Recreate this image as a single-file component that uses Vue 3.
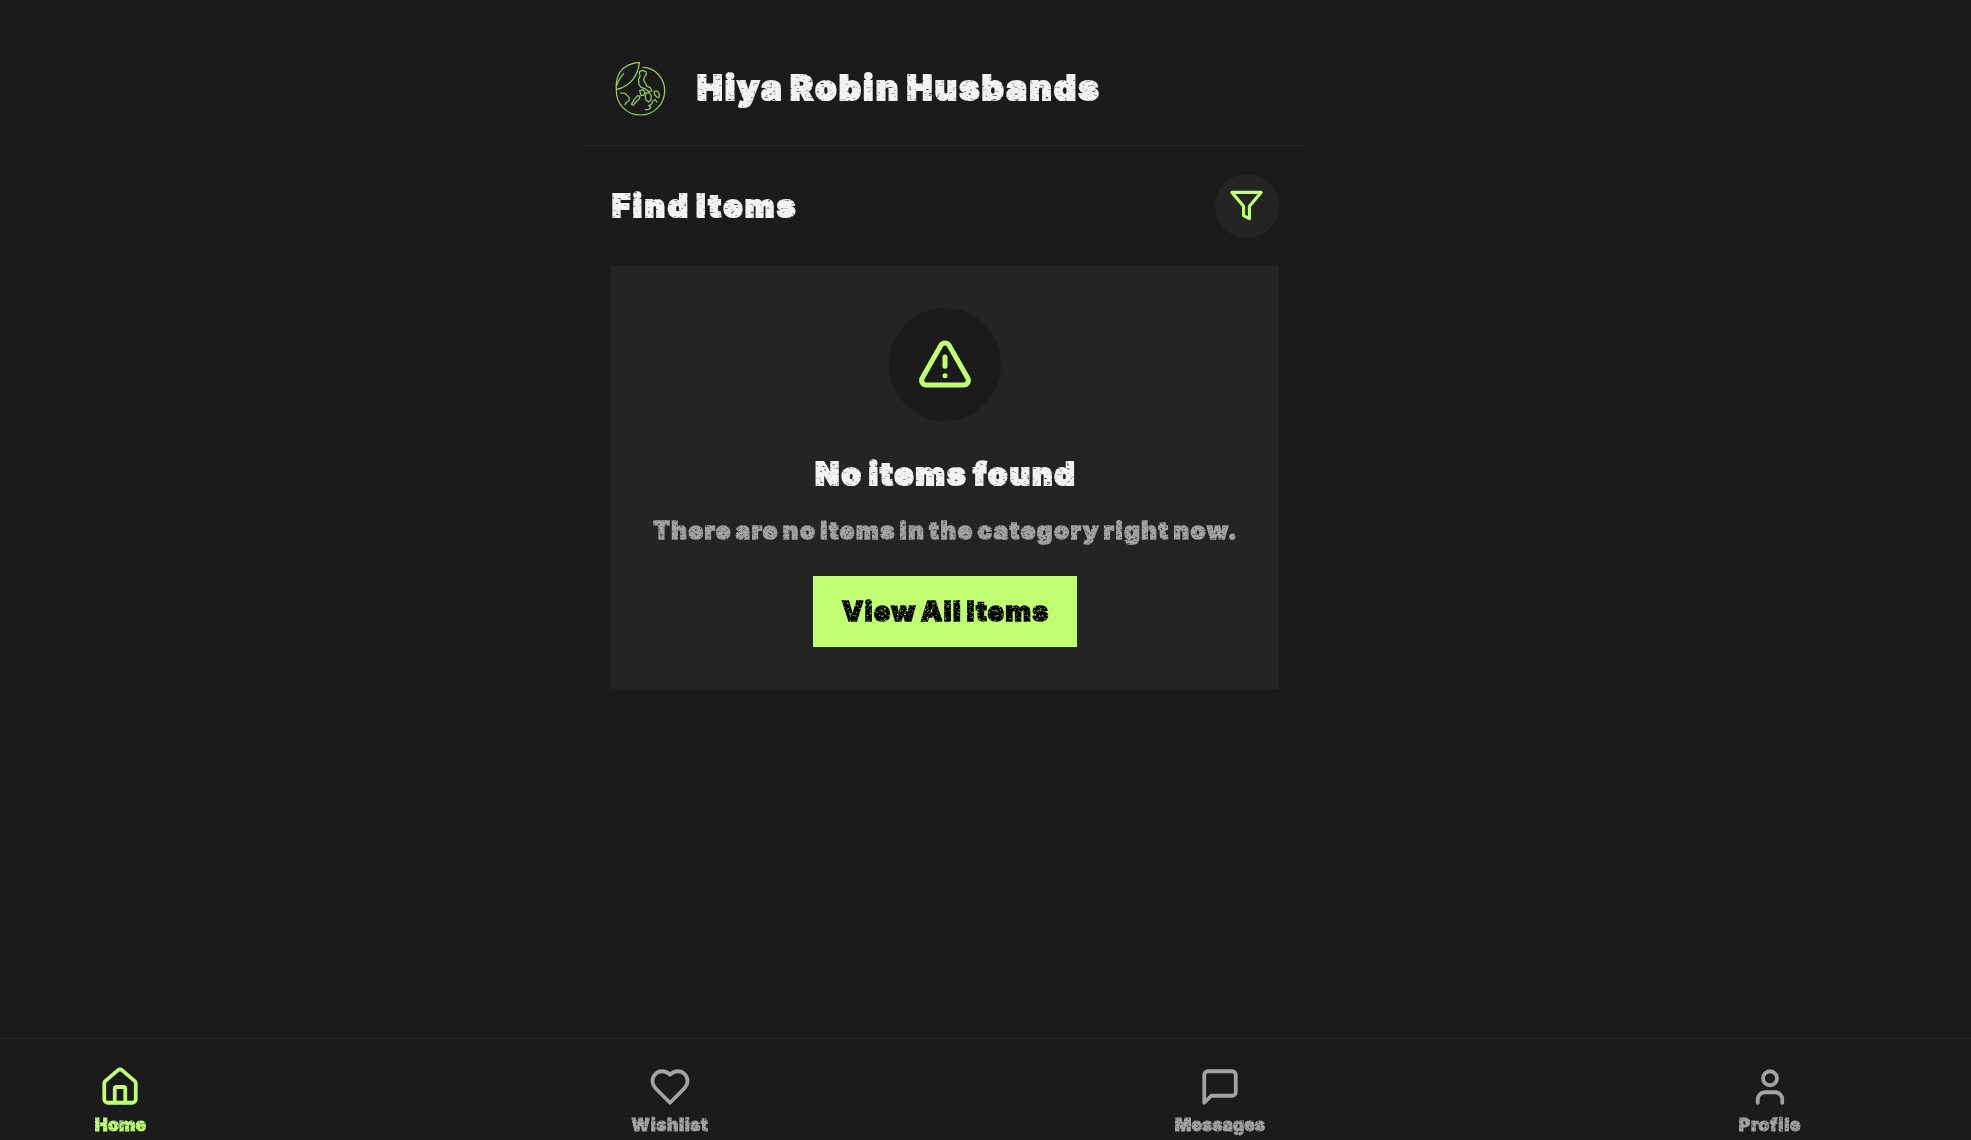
<script setup>
const items = [
  { label: 'Home', cls: 'home', paths: ['M15 21v-8a1 1 0 0 0-1-1h-4a1 1 0 0 0-1 1v8', 'M3 10a2 2 0 0 1 .709-1.528l7-5.999a2 2 0 0 1 2.582 0l7 5.999A2 2 0 0 1 21 10v9a2 2 0 0 1-2 2H5a2 2 0 0 1-2-2z'] },
  { label: 'Wishlist', cls: 'wishlist', paths: ['M19 14c1.49-1.46 3-3.21 3-5.5A5.5 5.5 0 0 0 16.5 3c-1.76 0-3 .5-4.5 2-1.5-1.5-2.74-2-4.5-2A5.5 5.5 0 0 0 2 8.5c0 2.3 1.5 4.05 3 5.5l7 7Z'] },
  { label: 'Messages', cls: 'messages', paths: ['M21 15a2 2 0 0 1-2 2H7l-4 4V5a2 2 0 0 1 2-2h14a2 2 0 0 1 2 2z'] },
  { label: 'Profile', cls: 'profile', paths: ['M19 21v-2a4 4 0 0 0-4-4H9a4 4 0 0 0-4 4v2', 'M16 7a4 4 0 1 1-8 0a4 4 0 1 1 8 0z'] },
]
</script>

<template>
  <div class="page">
    <svg class="defs" width="0" height="0" aria-hidden="true">
      <filter id="dirt" x="-2%" y="0" width="104%" height="100%" color-interpolation-filters="sRGB">
        <feTurbulence type="fractalNoise" baseFrequency="0.25 0.5" numOctaves="2" seed="4" result="n" />
        <feColorMatrix in="n" type="matrix" values="0 0 0 0 0  0 0 0 0 0  0 0 0 0 0  -4 0 0 0 3.5" result="m" />
        <feComposite in="SourceGraphic" in2="m" operator="in" />
      </filter>
      <filter id="grit" x="-2%" y="0" width="104%" height="100%" color-interpolation-filters="sRGB">
        <feTurbulence type="fractalNoise" baseFrequency="0.4 0.6" numOctaves="2" seed="7" result="n" />
        <feColorMatrix in="n" type="matrix" values="0 0 0 0 0  0 0 0 0 0  0 0 0 0 0  -3.5 0 0 0 2.95" result="m" />
        <feComposite in="SourceGraphic" in2="m" operator="in" />
      </filter>
    </svg>
    <main class="content">
      <header class="header">
        <svg class="logo" viewBox="34 33 168 168">
          <path d="M130 52C165 52 195 84 195 122C195 162 163 195 122 195C81 195 50 162 50 122C46 80 62 42 119 37C116 75 94 108 50 119M50 110C55 95 61 82 72 71" />
          <path d="M117 88L121 78L119 66L127 61L139 65L140 73L134 81L132 92L139 101L140 108L151 112L157 123L146 124L136 116L124 112L118 104Z" />
          <path d="M62 129L76 130L82 136L89 142L88 153L80 157L76 164M95 163L104 148L114 137L121 139L119 146L109 156L100 166Z" />
          <path d="M120 122L130 119L136 127L132 136L124 136ZM139 129L149 128L155 138L154 150L147 156L139 150L137 140ZM164 124L173 123L179 132L178 143L171 141L164 133ZM137 179L148 178L154 171L147 167L156 162L160 153L166 149L172 156" />
        </svg>
        <h1 class="type greeting">Hiya Robin Husbands</h1>
      </header>
      <section class="body">
        <div class="row">
          <h2 class="type find">Find Items</h2>
          <button class="filter" aria-label="Filter">
            <svg class="icon" viewBox="0 0 24 24"><path d="M22 3H2l8 9.46V19l4 2v-8.54z" /></svg>
          </button>
        </div>
        <div class="card">
          <div class="badge">
            <svg class="icon" viewBox="0 0 24 24"><path d="m21.73 18-8-14a2 2 0 0 0-3.48 0l-8 14A2 2 0 0 0 4 21h16a2 2 0 0 0 1.73-3M12 9v4M12 17h.01" /></svg>
          </div>
          <h3 class="type empty">No items found</h3>
          <p class="type note">There are no items in the category right now.</p>
          <button class="view"><span class="type all">View All Items</span></button>
        </div>
      </section>
    </main>
    <nav class="nav">
      <a v-for="(item, i) in items" :key="item.label" class="tab" :class="{ active: i === 0 }">
        <svg class="icon" viewBox="0 0 24 24"><path v-for="p in item.paths" :key="p" :d="p" /></svg>
        <span class="type label" :class="item.cls">{{ item.label }}</span>
      </a>
    </nav>
  </div>
</template>

<style>
body { margin: 0; background: #1b1b1b; overflow: hidden; }
</style>

<style scoped>
.page { height: 1140px; display: flex; flex-direction: column; background: #1b1b1b; color: #f2f2f2; font-family: Inter, "Liberation Sans", sans-serif; box-sizing: border-box; }
.defs { position: absolute; }
.content { width: 724px; margin-left: 583px; flex: 1; }
.header { padding: 33px 28px 0; height: 112px; border-bottom: 1px solid #242424; display: flex; align-items: center; gap: 30px; }
.logo { width: 56px; height: 56px; flex: none; fill: none; stroke: #9bce62; stroke-width: 3.6; stroke-linejoin: round; stroke-linecap: round; }
.type { margin: 0; font-weight: 900; white-space: nowrap; filter: url(#dirt); -webkit-text-stroke: 2.2px currentColor; }
.greeting { font-size: 34px; line-height: 50px; letter-spacing: 2.5px; word-spacing: -3px; margin-bottom: 2px; }
.body { padding: 28px; display: flex; flex-direction: column; gap: 28px; }
.row { display: flex; justify-content: space-between; align-items: center; }
.find { font-size: 31px; line-height: 44px; letter-spacing: 2.75px; word-spacing: -3px; padding-left: 1px; }
.icon { fill: none; stroke: currentColor; stroke-width: 2.15; stroke-linecap: round; stroke-linejoin: round; display: block; }
button { border: 0; padding: 0; font-family: inherit; }
.filter { width: 64px; height: 64px; border-radius: 50%; background: #242424; color: #c1ff72; display: grid; place-items: center; }
.filter .icon { width: 35px; height: 35px; margin: 0 1px 1px 0; }
.card { height: 423px; box-sizing: border-box; padding-top: 42px; background: #242424; display: flex; flex-direction: column; align-items: center; }
.badge { width: 112px; height: 113px; flex: none; border-radius: 50%; background: #1b1b1b; color: #c1ff72; display: grid; place-items: center; }
.badge .icon { width: 56px; height: 56px; margin-bottom: 1px; }
.empty { font-size: 31px; line-height: 44px; margin-top: 31px; letter-spacing: 2.3px; word-spacing: -3px; margin-right: -2.3px; }
.note { font-size: 24px; line-height: 36px; margin-top: 17px; color: #a3a3a3; letter-spacing: 1.6px; word-spacing: -2.7px; margin-right: -1.6px; -webkit-text-stroke-width: 1.4px; filter: url(#grit); }
.view { width: 264px; height: 71px; margin-top: 27px; background: #c1ff72; color: #000; display: grid; place-items: center; }
.all { font-size: 27.3px; line-height: 40px; letter-spacing: 1.1px; word-spacing: -2px; margin-right: -1.1px; -webkit-text-stroke-width: 1.4px; filter: url(#grit); }
.nav { height: 102px; box-sizing: border-box; border-top: 1px solid #242424; display: flex; gap: 410px; padding: 27px 0 0 50px; }
.tab { width: 140px; flex: none; display: flex; flex-direction: column; align-items: center; color: #a3a3a3; }
.tab .icon { width: 42px; height: 42px; flex: none; }
.tab.active { color: #c1ff72; }
.label { font-size: 17.3px; line-height: 24px; margin-top: 5px; -webkit-text-stroke-width: 0.9px; filter: url(#grit); }
.home { letter-spacing: 0.3px; padding-left: 1px; }
.wishlist { letter-spacing: 0.6px; }
.messages { letter-spacing: 0.1px; }
.profile { letter-spacing: 0.7px; }
</style>
